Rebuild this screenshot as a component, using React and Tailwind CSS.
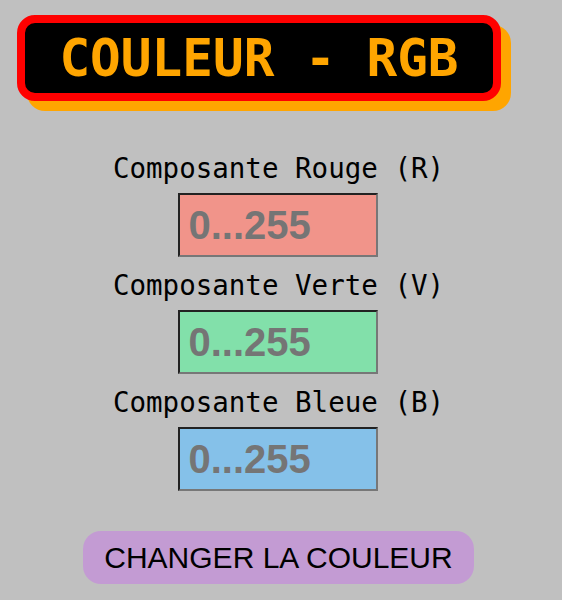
import { useState } from "react";

const channels = [
  { key: "r", label: "Composante Rouge (R)", bg: "bg-[#f1948a]" },
  { key: "v", label: "Composante Verte (V)", bg: "bg-[#82e0aa]" },
  { key: "b", label: "Composante Bleue (B)", bg: "bg-[#85c1e9]" },
];

export default function App() {
  const [values, setValues] = useState({ r: "", v: "", b: "" });

  return (
    <div className="min-h-[600px] w-full bg-[#c0c0c0] pt-[15px]">
      <div className="ml-[17px] flex h-[86px] w-[484px] items-center justify-center rounded-[18px] border-8 border-[#ff0000] bg-black shadow-[10px_10px_0_#ffa500]">
        <h1 className="font-['DejaVu_Sans_Mono',monospace] text-[51px] font-bold leading-none text-[#ffa500]">
          COULEUR - RGB
        </h1>
      </div>

      <div className="mt-[51px] flex w-[557px] flex-col items-center">
        {channels.map((c, i) => (
          <div key={c.key} className={"flex flex-col items-center " + (i > 0 ? "mt-[12px]" : "")}>
            <label className="font-['DejaVu_Sans_Mono',monospace] text-[27.5px] leading-[32px] text-black">
              {c.label}
            </label>
            <input
              type="text"
              value={values[c.key]}
              onChange={(e) => setValues({ ...values, [c.key]: e.target.value })}
              placeholder="0...255"
              className={
                "mt-[9px] h-[64px] w-[200px] border-2 border-t-[#222] border-l-[#222] border-b-[#777] border-r-[#777] px-[8px] font-['Liberation_Sans',Arial,sans-serif] text-[40px] font-bold text-black outline-none placeholder:text-[#757575] " +
                c.bg
              }
            />
          </div>
        ))}

        <button className="mt-[40px] h-[53px] rounded-[18px] bg-[#c39bd3] px-[21px] font-['Liberation_Sans',Arial,sans-serif] text-[30px] text-black">
          CHANGER LA COULEUR
        </button>
      </div>
    </div>
  );
}
